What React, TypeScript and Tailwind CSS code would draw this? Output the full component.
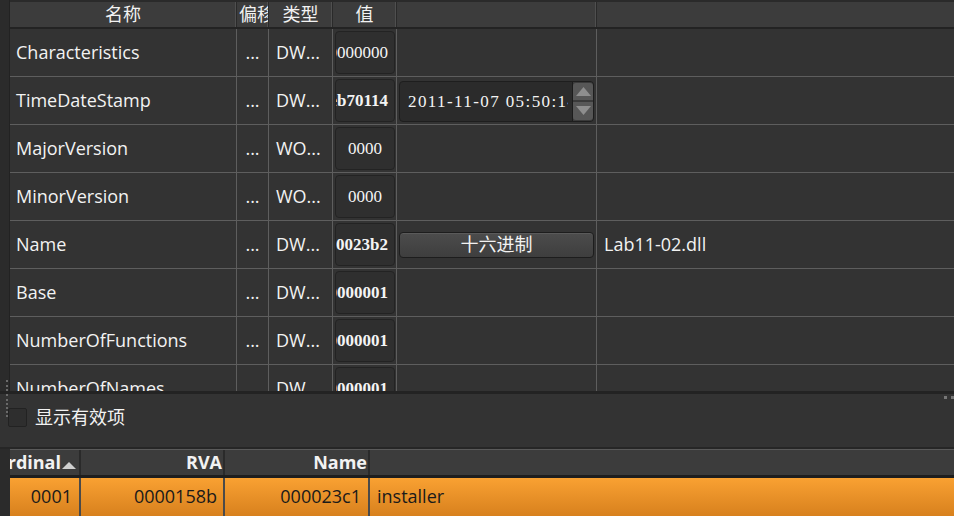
const rows = [
  { name: "Characteristics", type: "DW...", value: "00000000", bold: false, center: false, extra: "" },
  { name: "TimeDateStamp", type: "DW...", value: "4eb70114", bold: true, center: false, extra: "spin" },
  { name: "MajorVersion", type: "WO...", value: "0000", bold: false, center: true, extra: "" },
  { name: "MinorVersion", type: "WO...", value: "0000", bold: false, center: true, extra: "" },
  { name: "Name", type: "DW...", value: "000023b2", bold: true, center: false, extra: "button" },
  { name: "Base", type: "DW...", value: "00000001", bold: true, center: false, extra: "" },
  { name: "NumberOfFunctions", type: "DW...", value: "00000001", bold: true, center: false, extra: "" },
  { name: "NumberOfNames", type: "DW...", value: "00000001", bold: true, center: false, extra: "" },
];

function SpinBox() {
  return (
    <div className="flex h-[41px] w-full mt-[1px] rounded-[4px] border border-[#1e1e1e] bg-[#2b2b2b] overflow-hidden">
      <div className="flex-1 min-w-0 flex items-center pl-[8px] pr-[4px] border-r border-[#1c1c1c]">
        <div className="min-w-0 overflow-hidden">
          <span className="whitespace-nowrap font-['Liberation_Serif',serif] text-[17px] tracking-[1.4px] text-[#f4f4f4]">
            2011-11-07 05:50:14
          </span>
        </div>
      </div>
      <div className="w-[20px] flex flex-col bg-[#3a3a3a] gap-[2px] py-[1px]">
        <div className="flex-1 flex items-center justify-center bg-[#575757] rounded-t-[3px]">
          <svg width="15" height="9" viewBox="0 0 15 9">
            <path d="M0 9 L7.5 0 L15 9 Z" fill="#8e8e8e" />
          </svg>
        </div>
        <div className="flex-1 flex items-center justify-center bg-[#575757] rounded-b-[3px]">
          <svg width="15" height="9" viewBox="0 0 15 9">
            <path d="M0 0 L7.5 9 L15 0 Z" fill="#8e8e8e" />
          </svg>
        </div>
      </div>
    </div>
  );
}

export default function App() {
  return (
    <div className="w-[954px] h-[516px] overflow-hidden flex flex-col bg-[#333333] text-[#f2f2f2] font-['Open_Sans','Noto_Sans_CJK_SC',sans-serif] text-[18px]">
      {/* Fields table */}
      <div className="h-[391px] shrink-0 flex overflow-hidden">
        <div className="w-[10px] shrink-0 bg-[#2b2b2b] border-r border-[#222222] flex flex-col justify-end">
          <div className="ml-[6px] h-[11px] w-[2px] border-l-2 border-dotted border-[#6a6a6a]" />
        </div>
        <div className="flex-1 min-w-0 flex flex-col">
          <div className="h-[29px] shrink-0 flex bg-[#3c3c3c] border-t-2 border-t-[#2a2a2a] border-b-2 border-b-[#232323]">
            <div className="w-[227px] shrink-0 flex items-center justify-center border-r border-[#2a2a2a] shadow-[inset_-1px_0_0_#4f4f4f]">名称</div>
            <div className="w-[32px] shrink-0 flex items-center pl-[2px] overflow-hidden whitespace-nowrap border-r border-[#2a2a2a] shadow-[inset_-1px_0_0_#4f4f4f]">偏移</div>
            <div className="w-[64px] shrink-0 flex items-center justify-center border-r border-[#2a2a2a] shadow-[inset_-1px_0_0_#4f4f4f]">类型</div>
            <div className="w-[64px] shrink-0 flex items-center justify-center border-r border-[#2a2a2a] shadow-[inset_-1px_0_0_#4f4f4f]">值</div>
            <div className="w-[200px] shrink-0 border-r border-[#2a2a2a] shadow-[inset_-1px_0_0_#4f4f4f]" />
            <div className="flex-1" />
          </div>
          {rows.map((r) => (
            <div key={r.name} className="h-[48px] shrink-0 flex border-b border-[#5e5e5e]">
              <div className="w-[227px] shrink-0 flex items-center pl-[6px] border-r border-[#5e5e5e] whitespace-nowrap">{r.name}</div>
              <div className="w-[32px] shrink-0 flex items-center justify-center border-r border-[#5e5e5e]">...</div>
              <div className="w-[64px] shrink-0 flex items-center pl-[7px] border-r border-[#5e5e5e] whitespace-nowrap">{r.type}</div>
              <div className="w-[64px] shrink-0 pl-[2px] pr-[1px] py-[2px] border-r border-[#5e5e5e]">
                <div
                  className={
                    "h-full rounded-[4px] border border-[#232323] bg-[#2f2f2f] overflow-hidden flex items-center " +
                    (r.center ? "justify-center" : "justify-end pr-[6px]")
                  }
                >
                  <span
                    className={
                      "shrink-0 whitespace-nowrap font-['Liberation_Serif',serif] text-[17px] text-[#f4f4f4] " +
                      (r.bold ? "font-bold" : "font-normal")
                    }
                  >
                    {r.value}
                  </span>
                </div>
              </div>
              <div className="w-[200px] shrink-0 flex items-center px-[2px] border-r border-[#5e5e5e]">
                {r.extra === "spin" && <SpinBox />}
                {r.extra === "button" && (
                  <div className="w-full h-[26px] rounded-[4px] border border-[#1d1d1d] bg-gradient-to-b from-[#4c4c4c] to-[#3e3e3e] shadow-[inset_0_1px_0_#5a5a5a] flex items-center justify-center">
                    十六进制
                  </div>
                )}
              </div>
              <div className="flex-1 flex items-center pl-[7px] whitespace-nowrap">
                {r.extra === "button" ? "Lab11-02.dll" : ""}
              </div>
            </div>
          ))}
        </div>
      </div>

      {/* Filter panel */}
      <div className="h-[58px] shrink-0 flex justify-between border-t-[3px] border-t-[#232323] border-b-2 border-b-[#262626] bg-[#333333]">
        <div className="flex items-start pl-[6px]">
          <div className="h-[23px] w-[2px] border-l-2 border-dotted border-[#6a6a6a]" />
          <div className="mt-[14px] w-[19px] h-[19px] rounded-[2px] border border-[#222222] bg-[#2e2e2e]" />
          <div className="mt-[11px] ml-[8px] leading-[24px]">显示有效项</div>
        </div>
        <div className="flex gap-[4px] pt-[2px]">
          <div className="w-[3px] h-[3px] bg-[#777777]" />
          <div className="w-[3px] h-[3px] bg-[#777777]" />
        </div>
      </div>

      {/* Exports table */}
      <div className="flex-1 flex">
        <div className="w-[10px] shrink-0 bg-[#2b2b2b]" />
        <div className="flex-1 min-w-0 flex flex-col">
          <div className="h-[29px] shrink-0 flex bg-[#3c3c3c] border-t border-t-[#5a5a5a] border-b-[3px] border-b-[#1e1e1e] font-bold">
            <div className="w-[71px] shrink-0 flex items-center justify-end overflow-hidden border-r-2 border-[#2a2a2a] pr-[3px]">
              <span className="shrink-0 whitespace-nowrap">Ordinal</span>
              <svg className="shrink-0 ml-[1px] mt-[6px]" width="14" height="7" viewBox="0 0 14 7">
                <path d="M0 7 L7 0 L14 7 Z" fill="#cfcfcf" />
              </svg>
            </div>
            <div className="w-[144px] shrink-0 flex items-center justify-end pr-[1px] border-r-2 border-[#2a2a2a]">RVA</div>
            <div className="w-[145px] shrink-0 flex items-center justify-end pr-[1px] border-r-2 border-[#2a2a2a]">Name</div>
            <div className="flex-1" />
          </div>
          <div className="h-[40px] shrink-0 flex bg-gradient-to-b from-[#f9a132] to-[#d67f1c] text-[#1a1a1a]">
            <div className="w-[71px] shrink-0 flex justify-end pt-[5px] pr-[7px] border-r-2 border-[#4a4a4a]">0001</div>
            <div className="w-[144px] shrink-0 flex justify-end pt-[5px] pr-[6px] border-r-2 border-[#4a4a4a]">0000158b</div>
            <div className="w-[145px] shrink-0 flex justify-end pt-[5px] pr-[7px] border-r-2 border-[#4a4a4a]">000023c1</div>
            <div className="flex-1 pt-[5px] pl-[7px]">installer</div>
          </div>
        </div>
      </div>
    </div>
  );
}
